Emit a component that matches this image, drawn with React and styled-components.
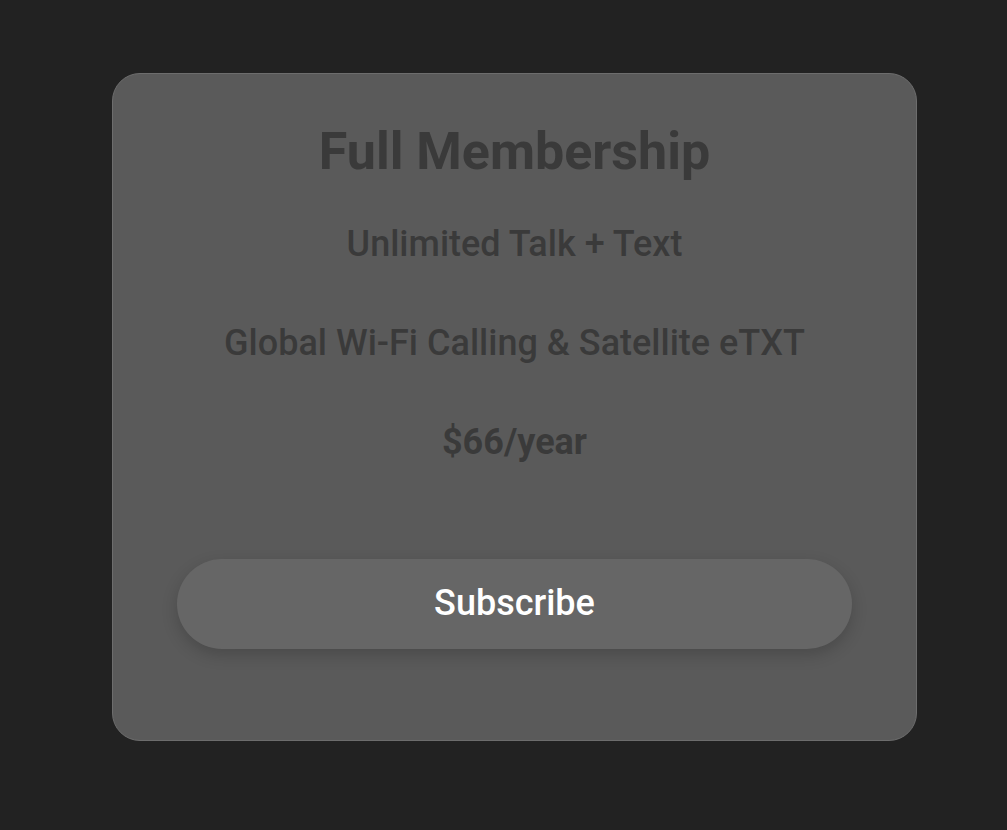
import React from "react";
import styled, {createGlobalStyle} from "styled-components";

const GlobalStyle = createGlobalStyle`
  html, body {
    margin: 0;
    padding: 0;
    background: #222222;
    font-family: Roboto, "Liberation Sans", sans-serif;
  }
`;

const Page = styled.div`
  min-height: 830px;
  padding: 73px 0 0 112px;
  box-sizing: border-box;
`;

const Card = styled.div`
  width: 805px;
  height: 668px;
  box-sizing: border-box;
  background: #5a5a5a;
  border: 1px solid #6d6d6d;
  border-radius: 28px;
  padding: 48px 64px 0;
  display: flex;
  flex-direction: column;
  align-items: center;
  color: #3a3a3a;
`;

const Title = styled.h1`
  margin: 0;
  font-size: 52px;
  line-height: 60px;
  font-weight: 700;
`;

const Line = styled.p`
  margin: ${(p) => p.$top}px 0 0;
  font-size: 36px;
  line-height: 40px;
  font-weight: ${(p) => (p.$bold ? 700 : 500)};
`;

const Button = styled.button`
  margin-top: 97px;
  width: 100%;
  height: 90px;
  border: none;
  border-radius: 45px;
  background: #666666;
  color: #ffffff;
  font-family: Roboto, "Liberation Sans", sans-serif;
  font-size: 36px;
  font-weight: 500;
  line-height: 1;
  padding: 0 0 2px;
  box-shadow: 0 6px 16px rgba(0, 0, 0, 0.18);
  cursor: pointer;
`;

const App = () => {
    return (
        <Page>
            <GlobalStyle/>
            <Card>
                <Title>Full Membership</Title>
                <Line $top={42}>Unlimited Talk + Text</Line>
                <Line $top={59}>Global Wi-Fi Calling &amp; Satellite eTXT</Line>
                <Line $top={59} $bold>$66/year</Line>
                <Button>Subscribe</Button>
            </Card>
        </Page>
    );
}

export default App;
